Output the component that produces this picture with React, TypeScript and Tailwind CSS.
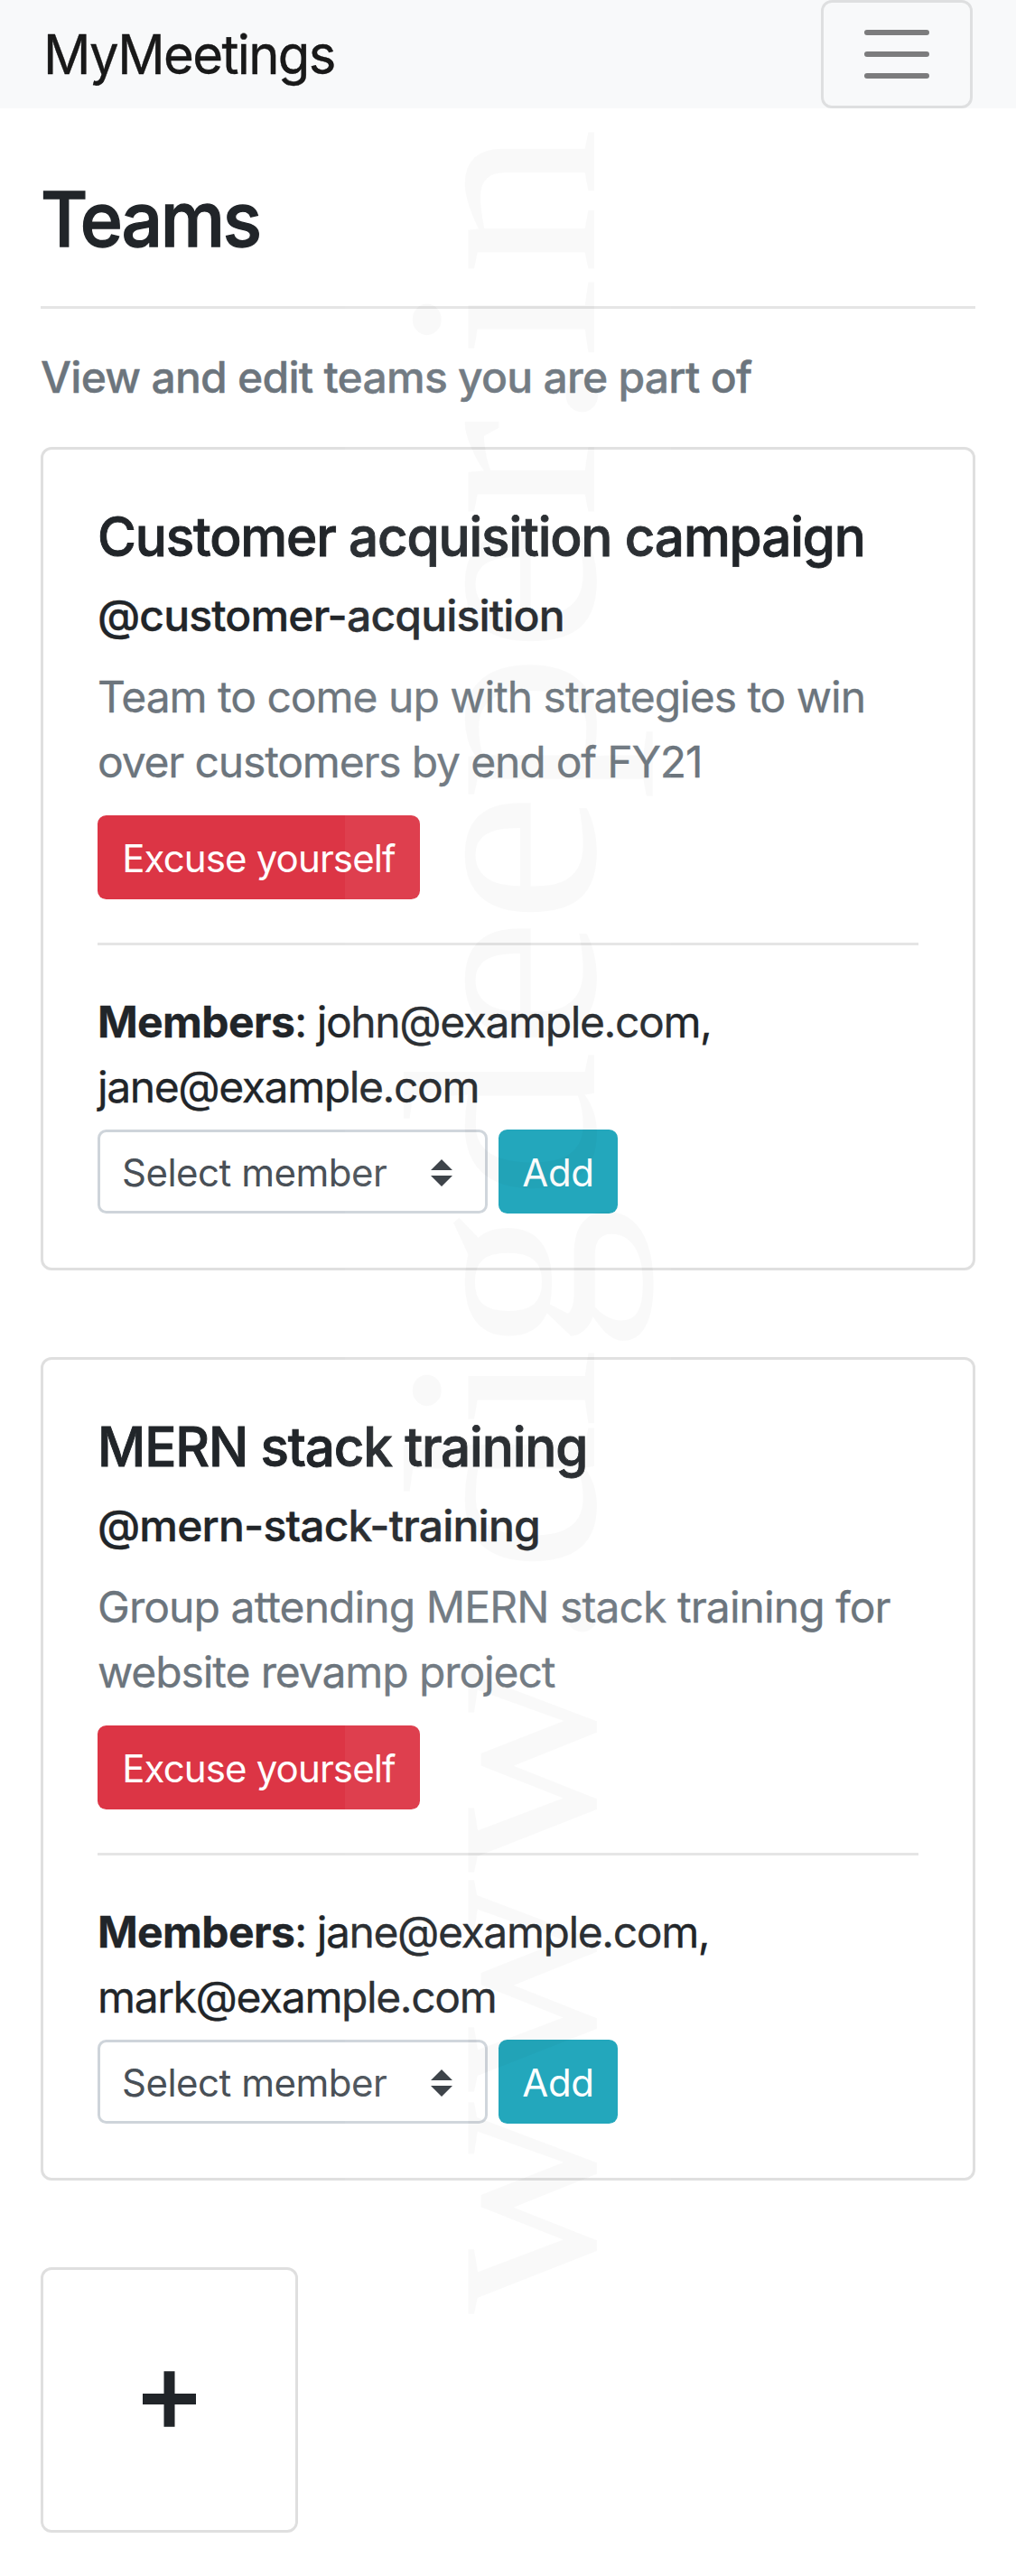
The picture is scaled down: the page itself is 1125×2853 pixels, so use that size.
type Team = {
  name: string;
  handle: string;
  description: [string, string];
  members: [string, string];
  tracking: { handle: string; d1: string; d2: string };
};

const teams: Team[] = [
  {
    name: "Customer acquisition campaign",
    handle: "@customer-acquisition",
    description: ["Team to come up with strategies to win", "over customers by end of FY21"],
    members: ["john@example.com,", "jane@example.com"],
    tracking: {
      handle: "tracking-[-0.82px]",
      d1: "tracking-[-1.03px]",
      d2: "tracking-[-1.18px]",
    },
  },
  {
    name: "MERN stack training",
    handle: "@mern-stack-training",
    description: ["Group attending MERN stack training for", "website revamp project"],
    members: ["jane@example.com,", "mark@example.com"],
    tracking: {
      handle: "tracking-[-0.8px]",
      d1: "tracking-[-0.92px]",
      d2: "tracking-[-1.1px]",
    },
  },
];

function Navbar() {
  return (
    <nav className="flex h-[120px] items-center justify-between bg-[#f8f9fa] px-12">
      <a className="origin-left scale-x-[0.967] text-[60px] leading-[90px] tracking-[-1.7px] text-black/90 [-webkit-text-stroke:0.4px]">MyMeetings</a>
      <button className="flex h-[120px] w-[168px] items-center justify-center rounded-xl border-[3px] border-black/10">
        <svg viewBox="0 0 30 30" className="size-[90px]" fill="none" stroke="rgba(0,0,0,0.5)" strokeWidth="2" strokeLinecap="round" strokeMiterlimit="10">
          <path d="M4 7h22M4 15h22M4 23h22" />
        </svg>
      </button>
    </nav>
  );
}

function TeamCard({ team }: { team: Team }) {
  const t = team.tracking;
  return (
    <article className="h-[912px] rounded-xl border-[3px] border-black/[0.125] p-[60px] whitespace-nowrap">
      <h5 className="mb-6 origin-left scale-x-[0.974] text-[60px] leading-[72px] font-medium tracking-[-1.2px] [-webkit-text-stroke:0.9px]">
        {team.name}
      </h5>
      <h6 className={`mb-[26px] text-[48px] leading-[56px] font-medium [-webkit-text-stroke:0.4px] ${t.handle}`}>{team.handle}</h6>
      <p className="mb-[23px] text-[48px] leading-[72px] text-[#6c757d] [-webkit-text-stroke:0.3px]">
        <span className={`block ${t.d1}`}>{team.description[0]}</span>
        <span className={`block ${t.d2}`}>{team.description[1]}</span>
      </p>
      <button className="flex h-[93px] w-[357px] items-center justify-center rounded-[9.6px] bg-[#dc3545] pt-0.5 text-[42px] leading-[63px] tracking-[-0.86px] text-white">
        Excuse yourself
      </button>
      <hr className="mt-12 mb-[49px] border-t-[3px] border-black/10" />
      <div className="mb-[11px] text-[48px] leading-[72px] tracking-[-1.4px] [-webkit-text-stroke:0.3px]">
        <span className="block">
          <b className="font-bold tracking-[-0.6px]">Members</b>: {team.members[0]}
        </span>
        <span className="block">{team.members[1]}</span>
      </div>
      <div className="flex gap-3">
        <div className="flex h-[93px] w-[432px] items-center justify-between rounded-[9.6px] border-[3px] border-[#ced4da] bg-white pt-0.5 pr-9 pl-6 text-[42px] text-[#495057]">
          <span className="tracking-[-0.5px]">Select member</span>
          <svg viewBox="0 0 4 5" className="h-[30px] w-6" fill="#343a40">
            <path d="M2 0L0 2h4zm0 5L0 3h4z" />
          </svg>
        </div>
        <button className="flex h-[93px] w-[132px] items-center justify-center rounded-[9.6px] bg-[#17a2b8] pt-0.5 text-[42px] leading-[63px] tracking-[-0.3px] text-white">
          Add
        </button>
      </div>
    </article>
  );
}

function Watermark() {
  return (
    <div className="pointer-events-none absolute inset-y-0 left-[382px] w-[361px] bg-white/5">
      <svg viewBox="0 0 361 2853" className="h-full w-full overflow-visible" aria-hidden="true">
        <g transform="translate(276 2557) rotate(-90) scale(1 0.93)" fill="rgba(0,0,0,0.024)" fontFamily="'Liberation Serif', serif" fontSize="327">
          <text x="-6 240 483 728 816 974 1058 1229 1395 1534 1670 1834 1984 2079 2160 2252">www.digdeeper.in</text>
        </g>
      </svg>
    </div>
  );
}

export default function App() {
  return (
    <div className="relative h-[2853px] w-[1125px] overflow-hidden bg-white font-['Inter',sans-serif] text-[#212529]">
      <Navbar />
      <main className="px-[45px] pt-[72px]">
        <h3 className="origin-left scale-x-[0.955] text-[84px] leading-[101px] font-medium tracking-[-2.4px] [-webkit-text-stroke:1.4px]">Teams</h3>
        <hr className="mt-[46px] mb-12 border-t-[3px] border-black/10" />
        <h5 className="mb-[50px] text-[48px] leading-[55px] font-medium tracking-[-0.74px] text-[#6c757d] [-webkit-text-stroke:0.4px]">
          View and edit teams you are part of
        </h5>
        <div className="flex flex-col gap-24">
          {teams.map((t) => (
            <TeamCard key={t.handle} team={t} />
          ))}
          <button className="flex h-[294px] w-[285px] items-center justify-center rounded-xl border-[3px] border-black/[0.125]">
            <svg viewBox="0 0 60 64" className="h-16 w-[60px]" stroke="#212529" strokeWidth="12">
              <path d="M0 31H59M29.500 0.300V61.700" />
            </svg>
          </button>
        </div>
      </main>
      <Watermark />
    </div>
  );
}
